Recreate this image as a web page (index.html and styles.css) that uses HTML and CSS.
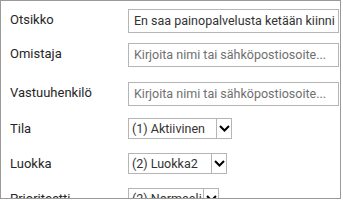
FILE: index.html
```html
<!DOCTYPE html>
<html>
<head>
<meta charset="utf-8">
<link rel="stylesheet" href="styles.css">
</head>
<body>
<div class="frame">
  <div class="row r1">
    <div class="label">Otsikko</div>
    <div class="input value">En saa painopalvelusta ketään kiinni</div>
  </div>
  <div class="row r2">
    <div class="label">Omistaja</div>
    <div class="input ph">Kirjoita nimi tai sähköpostiosoite...</div>
  </div>
  <div class="row r3">
    <div class="label">Vastuuhenkilö</div>
    <div class="input ph">Kirjoita nimi tai sähköpostiosoite...</div>
  </div>
  <div class="row r4">
    <div class="label">Tila</div>
    <div class="select s1"><span class="stext">(1) Aktiivinen</span><span class="btn"><svg width="11" height="7" viewBox="0 0 11 7"><path d="M1 1 L5.5 5.5 L10 1" fill="none" stroke="#000" stroke-width="2"/></svg></span></div>
  </div>
  <div class="row r5">
    <div class="label">Luokka</div>
    <div class="select s2"><span class="stext">(2) Luokka2</span><span class="btn"><svg width="11" height="7" viewBox="0 0 11 7"><path d="M1 1 L5.5 5.5 L10 1" fill="none" stroke="#000" stroke-width="2"/></svg></span></div>
  </div>
  <div class="row r6">
    <div class="label">Prioriteetti</div>
    <div class="select s3"><span class="stext">(2) Normaali</span><span class="btn"><svg width="11" height="7" viewBox="0 0 11 7"><path d="M1 1 L5.5 5.5 L10 1" fill="none" stroke="#000" stroke-width="2"/></svg></span></div>
  </div>
</div>
</body>
</html>
```
FILE: styles.css
```css
html, body { margin: 0; padding: 0; background: #fff; }
body { font-family: Roboto, "Liberation Sans", sans-serif; color: #222; }
.frame {
  box-sizing: border-box;
  width: 341px;
  height: 199px;
  border: 1px solid #9a9a9a;
  overflow: hidden;
  padding-top: 8px;
}
.row { display: flex; align-items: flex-start; }
.label {
  width: 118px;
  padding-left: 9px;
  font-size: 13px;
  color: #262626;
  padding-top: 3px;
  white-space: nowrap;
}
.input {
  box-sizing: border-box;
  width: 211px;
  height: 24px;
  border: 1px solid #b5b5b5;
  font-size: 12.5px;
  line-height: 22px;
  padding-left: 5px;
  white-space: nowrap;
  overflow: hidden;
}
.value { color: #333; }
.ph { color: #6f6f6f; }
.r2 { margin-top: 10px; }
.r3 { margin-top: 15px; }
.r4 { margin-top: 12px; }
.r5 { margin-top: 14px; }
.r6 { margin-top: 14px; }
.select {
  box-sizing: border-box;
  height: 21px;
  display: flex;
  border: 1px solid #b5b5b5;
  font-size: 12.5px;
  color: #333;
  white-space: nowrap;
}
.stext { flex: 1; padding-left: 3px; line-height: 19px; overflow: visible; }
.btn {
  box-sizing: border-box;
  width: 15px;
  height: 19px;
  border-left: 1px solid #b5b5b5;
  display: flex;
  align-items: center;
  justify-content: center;
  background: #fff;
  position: relative;
}
.s1 { width: 104px; }
.s2 { width: 99px; }
.s3 { width: 91px; }
```
